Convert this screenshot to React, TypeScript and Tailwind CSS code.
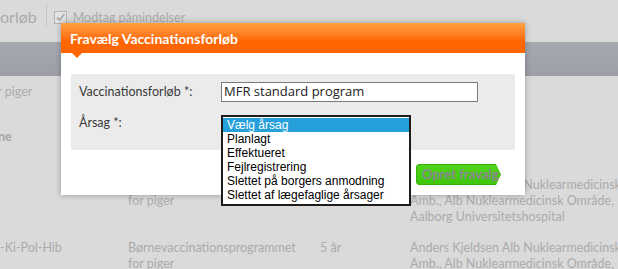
import React from 'react';

const REASONS = [
    'Vælg årsag',
    'Planlagt',
    'Effektueret',
    'Fejlregistrering',
    'Slettet på borgers anmodning',
    'Slettet af lægefaglige årsager',
];

const App: React.FC = () => {
    return (
        <div className="relative w-[618px] h-[269px] overflow-hidden bg-[#dadada] font-['Lato',sans-serif] text-[12px] text-[#ababab]">
            {/* Dimmed page behind the dialog */}
            <div className="flex items-start h-[42px] pt-[9px]">
                <span className="text-[16px] leading-[16px]">orløb</span>
                <div className="w-px h-[22px] bg-[#c6c6c6] ml-[9px] mr-[7px] -mt-[5px]" />
                <div className="w-[13px] h-[13px] mt-[2px] border border-[#b4b4b4] bg-[#e4e4e4] flex items-center justify-center">
                    <svg width="11" height="11" viewBox="0 0 11 11">
                        <path d="M2 5.5 L4.5 8 L9.5 2" fill="none" stroke="#a8a8a8" strokeWidth="1.8" />
                    </svg>
                </div>
                <span className="ml-[6px] text-[12.5px] leading-[16px] mt-px">Modtag påmindelser</span>
            </div>
            <div className="h-[34px] bg-gradient-to-b from-[#a6aab0] to-[#9ca0a6]" />

            <div className="leading-[16px] text-[12.5px]">
                <div className="mt-[8px] -ml-[14px]">for piger</div>
                <div className="mt-[29px] -ml-[2px] font-bold text-[#a4a4a4]">ne</div>
                <div className="mt-[32px] grid grid-cols-[128px_192px_90px_1fr]">
                    <div />
                    <div>Børnevaccinationsprogrammet<br />for piger</div>
                    <div>5 år</div>
                    <div className="whitespace-nowrap">Anders Kjeldsen Alb Nuklearmedicinsk<br />Amb., Alb Nuklearmedicinsk Område,<br />Aalborg Universitetshospital</div>
                </div>
                <div className="mt-[15px] grid grid-cols-[128px_192px_90px_1fr]">
                    <div>-Ki-Pol-Hib</div>
                    <div>Børnevaccinationsprogrammet<br />for piger</div>
                    <div>5 år</div>
                    <div className="whitespace-nowrap">Anders Kjeldsen Alb Nuklearmedicinsk<br />Amb., Alb Nuklearmedicinsk Område,<br />Aalborg Universitetshospital</div>
                </div>
            </div>

            {/* Dialog */}
            <div className="absolute left-[61px] top-[23px] w-[464px] h-[172px] bg-white shadow-[0_0_6px_rgba(0,0,0,0.3)] flex flex-col">
                <div className="relative h-[30px] bg-gradient-to-b from-[#ffa040] to-[#ff6600] to-60% flex items-center px-[9px]">
                    <span className="text-white font-bold text-[14px]">Fravælg Vaccinationsforløb</span>
                    <svg className="absolute left-[11px] top-[30px]" width="10" height="5" viewBox="0 0 10 5">
                        <path d="M0 0 L10 0 L5 5 Z" fill="#ff6600" />
                    </svg>
                </div>
                <div className="flex-1 px-[10px] pt-[21px]">
                    <div className="h-[76px] bg-[#ebebeb] px-[8px] pt-[8px] text-[#3a3a3a] text-[12.5px]">
                        <div className="flex items-center h-[20px]">
                            <span className="w-[142px]">Vaccinationsforløb *:</span>
                            <div className="w-[257px] h-[20px] border border-[#7a7a7a] bg-white flex items-center px-[2px] font-['Open_Sans',sans-serif] text-[13px] text-[#222]">
                                MFR standard program
                            </div>
                        </div>
                        <div className="flex items-center h-[20px] mt-[11px]">
                            <span className="w-[142px]">Årsag *:</span>
                        </div>
                    </div>
                    <div className="flex justify-end mt-[14px] pr-[14px]">
                        <div className="w-[85px] h-[21px] rounded-l-[3px] border border-[#36b008] bg-gradient-to-b from-[#50d41a] to-[#3fc60b] [clip-path:polygon(0_0,calc(100%-5px)_0,100%_50%,calc(100%-5px)_100%,0_100%)] flex items-center pl-[5px] font-bold text-[13px] text-[#8c8494]">
                            Opret fravalg
                        </div>
                    </div>
                </div>
            </div>

            {/* Open select list */}
            <div className="absolute left-[221px] top-[115px] w-[190px] border-2 border-[#1c1c1c] bg-white pt-px pb-[2px] font-['Liberation_Sans',Arial,sans-serif] text-[12px] text-black">
                {REASONS.map((r, i) => (
                    <div key={r} className={`h-[14px] leading-[14px] pl-[4px] ${i === 0 ? 'bg-[#26a0da] text-white' : ''}`}>
                        {r}
                    </div>
                ))}
            </div>
        </div>
    );
};

export default App;
